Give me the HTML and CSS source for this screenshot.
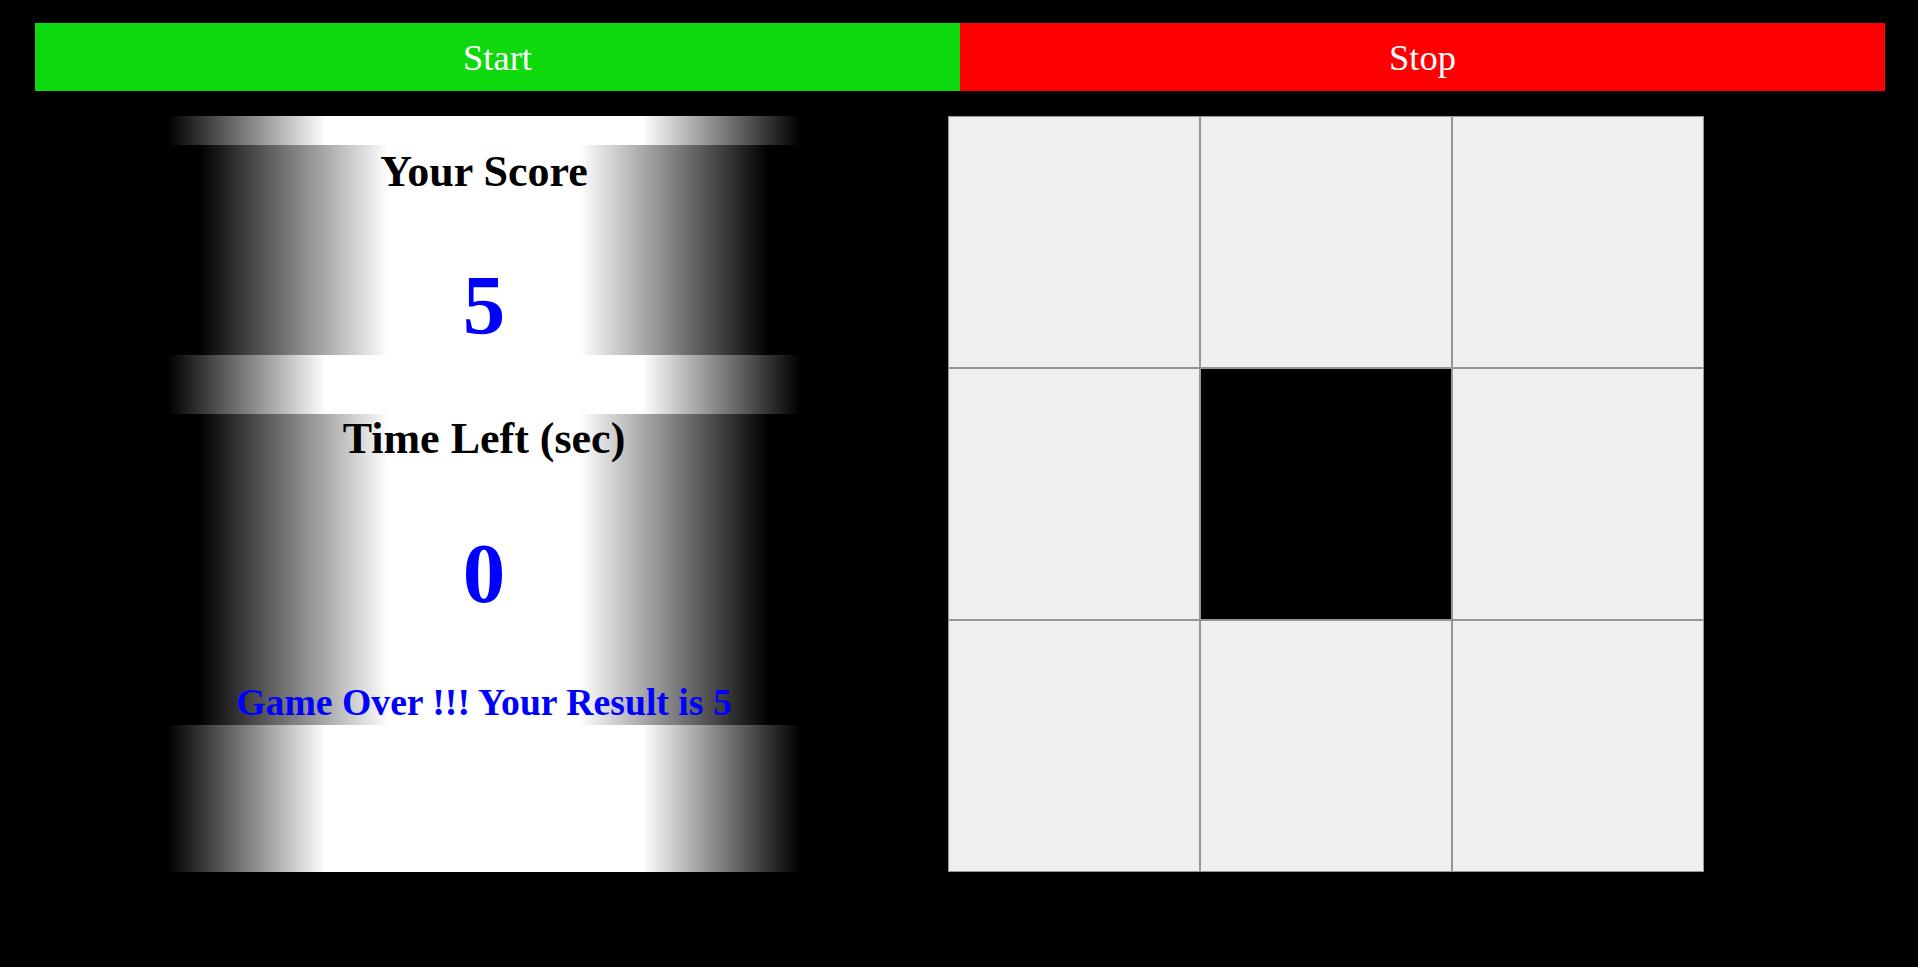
FILE: index.html
```html
<!DOCTYPE html>
<html lang="en">
<head>
<meta charset="utf-8">
<title>Whack Game</title>
<link rel="stylesheet" href="styles.css">
</head>
<body>
<div class="app">
  <div class="controls">
    <div class="btn btn-start">Start</div>
    <div class="btn btn-stop">Stop</div>
  </div>
  <div class="main">
    <div class="panel">
      <div class="section section-score">
        <div class="title title-score">Your Score</div>
        <div class="value value-score">5</div>
      </div>
      <div class="section section-time">
        <div class="title title-time">Time Left (sec)</div>
        <div class="value value-time">0</div>
        <div class="result">Game Over !!! Your Result is 5</div>
      </div>
    </div>
    <div class="grid">
      <div class="cell"></div>
      <div class="cell"></div>
      <div class="cell"></div>
      <div class="cell"></div>
      <div class="cell cell-active"></div>
      <div class="cell"></div>
      <div class="cell"></div>
      <div class="cell"></div>
      <div class="cell"></div>
    </div>
  </div>
</div>
</body>
</html>
```
FILE: styles.css
```css
html, body {
  margin: 0;
  background: #000;
}
body {
  font-family: "Liberation Serif", "Times New Roman", serif;
}
.app {
  padding: 23px 33px 0 35px;
}
.controls {
  display: flex;
  height: 68px;
}
.btn {
  flex: 1;
  display: flex;
  align-items: center;
  justify-content: center;
  color: #fff;
  font-size: 36.5px;
}
.btn-start {
  background: #0ed90e;
}
.btn-stop {
  background: #ff0000;
}
.main {
  display: flex;
  align-items: flex-start;
  margin-top: 25px;
  padding-left: 133px;
  gap: 148px;
}
.panel {
  width: 632px;
  height: 756px;
  box-sizing: border-box;
  padding-top: 29px;
  display: flex;
  flex-direction: column;
  background: linear-gradient(to right, #000 0%, #fff 25%, #fff 75%, #000 100%);
}
.section {
  background: linear-gradient(to right, #000 5%, #fff 35%, #fff 65%, #000 95%);
  text-align: center;
  font-weight: bold;
}
.section-score {
  height: 210px;
}
.section-time {
  margin-top: 59px;
  height: 311px;
}
.title {
  color: #000;
  font-size: 44px;
}
.title-score {
  line-height: 53px;
}
.title-time {
  line-height: 49px;
}
.value {
  color: #0000ff;
  font-size: 85px;
  line-height: 100px;
}
.value-score {
  margin-top: 57px;
}
.value-time {
  margin-top: 60px;
}
.result {
  color: #0000ff;
  font-size: 37.7px;
  line-height: 45px;
  margin-top: 57px;
}
.grid {
  display: grid;
  grid-template-columns: repeat(3, 252px);
  grid-template-rows: repeat(3, 252px);
}
.cell {
  box-sizing: border-box;
  border: 1px solid #969696;
  background: #efefef;
}
.cell-active {
  background: #000;
}
```
